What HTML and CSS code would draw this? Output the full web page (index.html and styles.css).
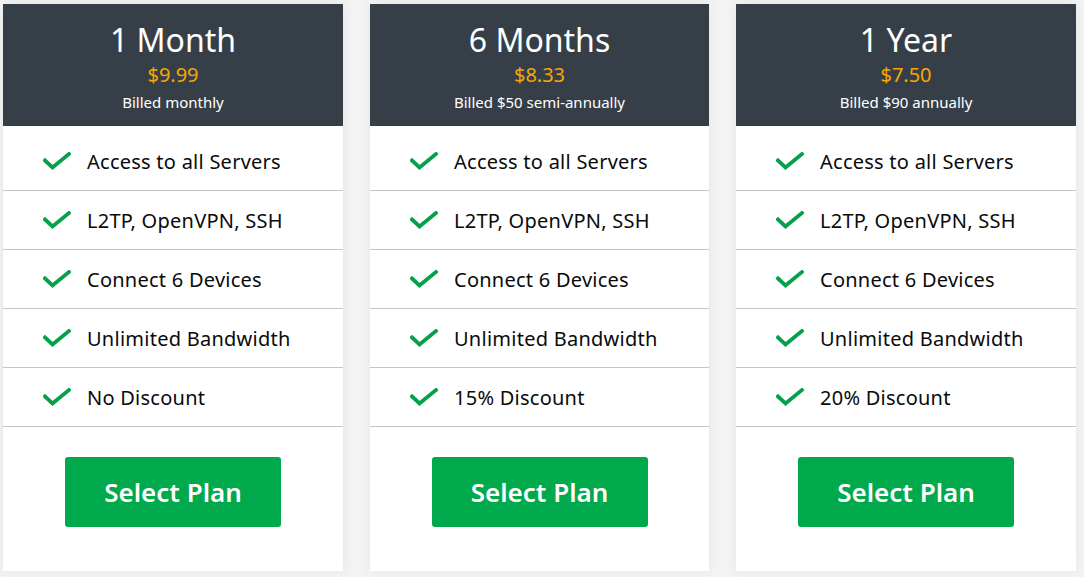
FILE: index.html
```html
<!DOCTYPE html>
<html>
<head>
<meta charset="utf-8">
<link rel="stylesheet" href="styles.css">
</head>
<body>
<div class="plans">
  <div class="card">
    <div class="head">
      <div class="title">1 Month</div>
      <div class="price">$9.99</div>
      <div class="billed">Billed monthly</div>
    </div>
    <ul class="features">
      <li><svg class="check" viewBox="0 0 28 18"><path d="M2 8.5l7.5 7L26 2" /></svg>Access to all Servers</li>
      <li><svg class="check" viewBox="0 0 28 18"><path d="M2 8.5l7.5 7L26 2" /></svg>L2TP, OpenVPN, SSH</li>
      <li><svg class="check" viewBox="0 0 28 18"><path d="M2 8.5l7.5 7L26 2" /></svg>Connect 6 Devices</li>
      <li><svg class="check" viewBox="0 0 28 18"><path d="M2 8.5l7.5 7L26 2" /></svg>Unlimited Bandwidth</li>
      <li><svg class="check" viewBox="0 0 28 18"><path d="M2 8.5l7.5 7L26 2" /></svg>No Discount</li>
    </ul>
    <div class="action"><a class="btn">Select Plan</a></div>
  </div>
  <div class="card">
    <div class="head">
      <div class="title">6 Months</div>
      <div class="price">$8.33</div>
      <div class="billed">Billed $50 semi-annually</div>
    </div>
    <ul class="features">
      <li><svg class="check" viewBox="0 0 28 18"><path d="M2 8.5l7.5 7L26 2" /></svg>Access to all Servers</li>
      <li><svg class="check" viewBox="0 0 28 18"><path d="M2 8.5l7.5 7L26 2" /></svg>L2TP, OpenVPN, SSH</li>
      <li><svg class="check" viewBox="0 0 28 18"><path d="M2 8.5l7.5 7L26 2" /></svg>Connect 6 Devices</li>
      <li><svg class="check" viewBox="0 0 28 18"><path d="M2 8.5l7.5 7L26 2" /></svg>Unlimited Bandwidth</li>
      <li><svg class="check" viewBox="0 0 28 18"><path d="M2 8.5l7.5 7L26 2" /></svg>15% Discount</li>
    </ul>
    <div class="action"><a class="btn">Select Plan</a></div>
  </div>
  <div class="card">
    <div class="head">
      <div class="title">1 Year</div>
      <div class="price">$7.50</div>
      <div class="billed">Billed $90 annually</div>
    </div>
    <ul class="features">
      <li><svg class="check" viewBox="0 0 28 18"><path d="M2 8.5l7.5 7L26 2" /></svg>Access to all Servers</li>
      <li><svg class="check" viewBox="0 0 28 18"><path d="M2 8.5l7.5 7L26 2" /></svg>L2TP, OpenVPN, SSH</li>
      <li><svg class="check" viewBox="0 0 28 18"><path d="M2 8.5l7.5 7L26 2" /></svg>Connect 6 Devices</li>
      <li><svg class="check" viewBox="0 0 28 18"><path d="M2 8.5l7.5 7L26 2" /></svg>Unlimited Bandwidth</li>
      <li><svg class="check" viewBox="0 0 28 18"><path d="M2 8.5l7.5 7L26 2" /></svg>20% Discount</li>
    </ul>
    <div class="action"><a class="btn">Select Plan</a></div>
  </div>
</div>
</body>
</html>
```
FILE: styles.css
```css
* { box-sizing: border-box; }
html, body { margin: 0; padding: 0; }
body {
  background: #f3f3f3;
  font-family: "Noto Sans", "Open Sans", sans-serif;
  color: #111;
}
.plans {
  display: flex;
  gap: 27px;
  padding: 4px 3px 6px 3px;
}
.card {
  flex: 0 0 340px;
  height: 567px;
  background: #fff;
  box-shadow: 0 0 12px rgba(0,0,0,0.06);
  display: flex;
  flex-direction: column;
}
.card:nth-child(2) { flex-basis: 339px; }
.head {
  background: #363f47;
  color: #fff;
  text-align: center;
  height: 122px;
  padding-top: 16px;
}
.title {
  font-size: 32px;
  line-height: 40px;
  font-weight: 400;
}
.price {
  color: #f8a602;
  font-size: 20px;
  line-height: 30px;
}
.billed {
  font-size: 15px;
  line-height: 24px;
}
.features {
  list-style: none;
  margin: 0;
  padding: 6px 0 0 0;
}
.features li {
  height: 59px;
  border-bottom: 1px solid #c4c4c4;
  display: flex;
  align-items: center;
  padding-left: 40px;
  font-size: 20px;
  letter-spacing: 0.25px;
  color: #0a0a0a;
}
.check {
  width: 28px;
  height: 18px;
  margin-right: 16px;
  fill: none;
  stroke: #06a04b;
  stroke-width: 3.8;
  stroke-linecap: square;
}
.action {
  display: flex;
  justify-content: center;
  padding-top: 30px;
}
.btn {
  width: 216px;
  height: 70px;
  background: #00a94b;
  color: #fff;
  border-radius: 3px;
  display: flex;
  align-items: center;
  justify-content: center;
  font-size: 26px;
  font-weight: 600;
  cursor: pointer;
}
```
